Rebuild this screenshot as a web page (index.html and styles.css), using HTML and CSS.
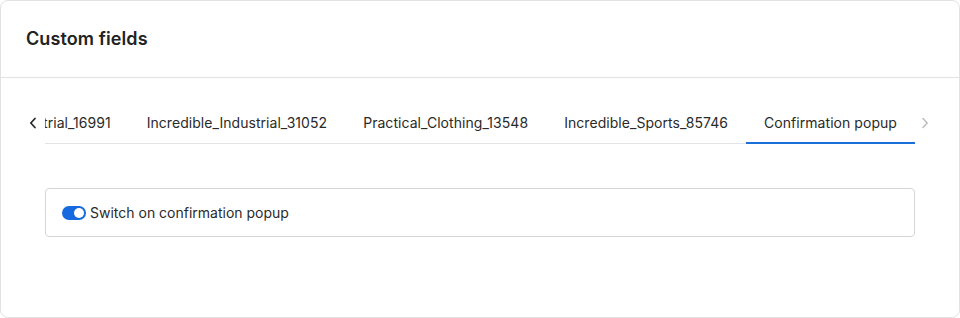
FILE: index.html
```html
<!DOCTYPE html>
<html>
<head>
<meta charset="utf-8">
<link rel="stylesheet" href="styles.css">
</head>
<body>
	<div class="card">
		<div class="card-header">
			<h2 class="card-title">Custom fields</h2>
		</div>

		<div class="card-body">
			<div class="tabs">
				<button class="tab-arrow prev" type="button">
					<svg width="8" height="12" viewBox="0 0 8 12"><path d="M6 1.5 1.8 6 6 10.5" fill="none" stroke="currentColor" stroke-width="1.8" stroke-linecap="round" stroke-linejoin="round"/></svg>
				</button>
				<div class="tab-strip">
					<div class="tab">Incredible_Industrial_16991</div>
					<div class="tab">Incredible_Industrial_31052</div>
					<div class="tab">Practical_Clothing_13548</div>
					<div class="tab">Incredible_Sports_85746</div>
					<div class="tab active">Confirmation popup</div>
				</div>
				<button class="tab-arrow next" type="button">
					<svg width="8" height="12" viewBox="0 0 8 12"><path d="M2 1.5 6.2 6 2 10.5" fill="none" stroke="currentColor" stroke-width="1.5" stroke-linecap="round" stroke-linejoin="round"/></svg>
				</button>
			</div>

			<div class="panel">
				<label class="switch-row">
					<span class="switch on"><span class="knob"></span></span>
					<span>Switch on confirmation popup</span>
				</label>
			</div>
		</div>
	</div>
</body>
</html>
```

FILE: styles.css
```css
html, body {
	margin: 0;
	padding: 0;
	background: #fff;
}
body {
	font-family: Inter, "Liberation Sans", sans-serif;
	color: #2a2a2a;
}
.card {
	box-sizing: border-box;
	width: 960px;
	height: 318px;
	border: 1px solid #e2e2e2;
	border-radius: 8px;
	background: #fff;
}
.card-header {
	padding: 26px 25px 26px;
	border-bottom: 1px solid #e2e2e2;
}
.card-title {
	margin: 0;
	font-size: 18px;
	font-weight: 600;
	line-height: 24px;
	letter-spacing: 0.1px;
	color: #222;
}
.card-body {
	padding: 27px 25px 0;
}
.tabs {
	display: flex;
	align-items: stretch;
}
.tab-arrow {
	width: 19px;
	padding: 0 0 3px;
	margin: 0;
	border: 0;
	background: none;
	display: flex;
	align-items: center;
	cursor: pointer;
}
.tab-arrow.prev {
	justify-content: flex-start;
	padding-left: 3px;
	color: #2a2a2a;
}
.tab-arrow.next {
	justify-content: center;
	color: #bdbdbd;
}
.tab-strip {
	flex: 1;
	display: flex;
	justify-content: flex-end;
	overflow: hidden;
	box-shadow: inset 0 -1px 0 #e4e4e4;
}
.tab {
	flex: none;
	padding: 8px 18px 9px;
	border-bottom: 2px solid transparent;
	font-size: 14px;
	line-height: 20px;
	letter-spacing: 0.05px;
	white-space: nowrap;
	color: #2a2a2a;
}
.tab.active {
	border-bottom-color: #1b6fd8;
}
.panel {
	margin: 44px 19px 0;
	height: 49px;
	box-sizing: border-box;
	border: 1px solid #d5d5d5;
	border-radius: 4px;
	padding: 0 16px;
	display: flex;
	align-items: center;
}
.switch-row {
	display: flex;
	align-items: center;
	gap: 4px;
	font-size: 14px;
	line-height: 20px;
	color: #2a2a2a;
}
.switch {
	position: relative;
	width: 24px;
	height: 14px;
	border-radius: 7px;
	background: #c8c8c8;
}
.switch.on {
	background: #1769e0;
}
.knob {
	position: absolute;
	top: 2px;
	left: 2px;
	width: 10px;
	height: 10px;
	border-radius: 50%;
	background: #fff;
}
.switch.on .knob {
	left: 12px;
}
```
